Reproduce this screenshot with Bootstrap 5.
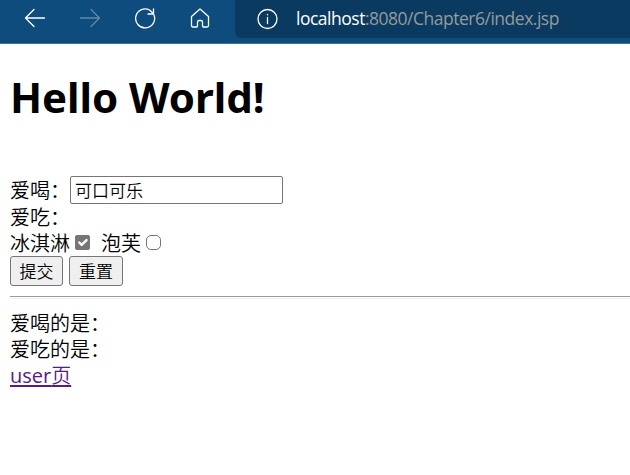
<!DOCTYPE html>
<html lang="zh-CN">
<head>
<meta charset="utf-8">
<meta name="viewport" content="width=device-width, initial-scale=1">
<title>index.jsp</title>
<link href="https://cdn.jsdelivr.net/npm/bootstrap@5.3.0/dist/css/bootstrap.min.css" rel="stylesheet">
<style>
body { font-family: "Noto Sans CJK SC", sans-serif; font-size: 20px; font-weight: 350; line-height: 26px; color: #000; background: #fff; overflow: hidden; }
.toolbar { height: 44px; background: #0d4c7c; border-bottom: 1px solid #3d709d; padding-left: 24px; }
.tools { width: 211px; height: 36px; gap: 33px; }
.tools svg, .address svg { width: 22px; height: 22px; fill: none; stroke: #fff; stroke-width: 1.3; stroke-linecap: round; stroke-linejoin: round; flex: none; }
.tools .dim { stroke: #6288aa; }
.address { height: 38px; background: #0a3a5f; border-radius: 0 0 0 6px; padding-left: 21px; }
.url { font-family: "Open Sans", sans-serif; font-size: 17.5px; font-weight: 400; line-height: 24px; margin: 0 0 2px 18px; color: #959a9d; white-space: nowrap; letter-spacing: -.49px; }
.url span { color: #fff; }
.content { padding: 25px 0 0 10px; }
.title { font-family: "Noto Sans", sans-serif; font-size: 42px; font-weight: 700; line-height: 56px; height: 107px; margin: 0; letter-spacing: -.05px; }
.drink { width: 213px; height: 28px; padding: 0 4px 1px; font-size: 17px; line-height: 23px; border: 1px solid #767676; border-radius: 2px; background: #fff; color: #000; font-weight: inherit; }
.line-label { width: 60px; white-space: nowrap; }
.tick { width: 15px; height: 15px; margin: 0 0 2px 5px; border: 1px solid #767676; border-radius: 3px; float: none; flex: none; }
.tick:checked { background-color: #767676; border-color: #767676; background-size: 16px 16px; border-radius: 2px; }
.second { padding-left: 11px; }
.second + .tick { margin-left: 5px; }
.plain { width: 53px; height: 30px; padding: 0; font-size: 17px; line-height: 26px; color: #000; background: #efefef; border: 1px solid #767676; border-radius: 3px; font-weight: inherit; }
.plain + .plain { width: 54px; margin-left: 6px; }
.rule { height: 3px; margin: 10px 0 11px; border: 0; border-top: 1px solid #9a9a9a; border-bottom: 1px solid #eee; opacity: 1; background: none; }
.visited { color: #551a8b; text-decoration-thickness: 1.5px; text-underline-offset: 2px; }
.visited span { font-family: "Open Sans", sans-serif; font-weight: 400; }
</style>
</head>
<body>
<header class="toolbar d-flex align-items-start">
  <nav class="tools d-flex align-items-center flex-shrink-0">
    <svg viewBox="0 0 22 22"><path d="M20.500 11H1.500M10 2.500L1.500 11l8.500 8.500"/></svg>
    <svg class="dim" viewBox="0 0 22 22"><path d="M1.500 11h19M12 2.500l8.500 8.500-8.500 8.500"/></svg>
    <svg viewBox="0 0 22 22"><path d="M20 8A9.500 9.500 0 1 1 15.500 3L19.300 6.500M19.500 2v5h-5.500"/></svg>
    <svg viewBox="0 0 22 22"><path d="M2.500 9.500L11 2l8.500 7.500v9q0 1.500-1.500 1.500h-3.500q-1 0-1-1v-4q0-1.500-1.500-1.500h-2q-1.500 0-1.500 1.500v4q0 1-1 1H4q-1.500 0-1.500-1.500z"/></svg>
  </nav>
  <div class="address flex-grow-1 d-flex align-items-center">
    <svg viewBox="0 0 22 22"><circle cx="11.500" cy="11" r="9.500"/><path d="M11.500 9.500v6M11.500 6.500v.3"/></svg>
    <div class="url"><span>localhost</span>:8080/Chapter6/index.jsp</div>
  </div>
</header>
<main class="content">
  <h1 class="title">Hello World!</h1>
  <form>
    <div class="d-flex align-items-center">
      <label class="line-label" for="drink">爱喝：</label>
      <input class="drink" id="drink" type="text" value="可口可乐">
    </div>
    <div>爱吃：</div>
    <div class="d-flex align-items-center">
      <label for="ice">冰淇淋</label>
      <input class="form-check-input tick" id="ice" type="checkbox" checked>
      <label class="second" for="puff">泡芙</label>
      <input class="form-check-input tick" id="puff" type="checkbox">
    </div>
    <div class="d-flex">
      <button class="plain" type="button">提交</button>
      <button class="plain" type="button">重置</button>
    </div>
  </form>
  <hr class="rule">
  <div>爱喝的是：</div>
  <div>爱吃的是：</div>
  <a class="visited" href="#"><span>user</span>页</a>
</main>
<script src="https://cdn.jsdelivr.net/npm/bootstrap@5.3.0/dist/js/bootstrap.bundle.min.js"></script>
</body>
</html>
